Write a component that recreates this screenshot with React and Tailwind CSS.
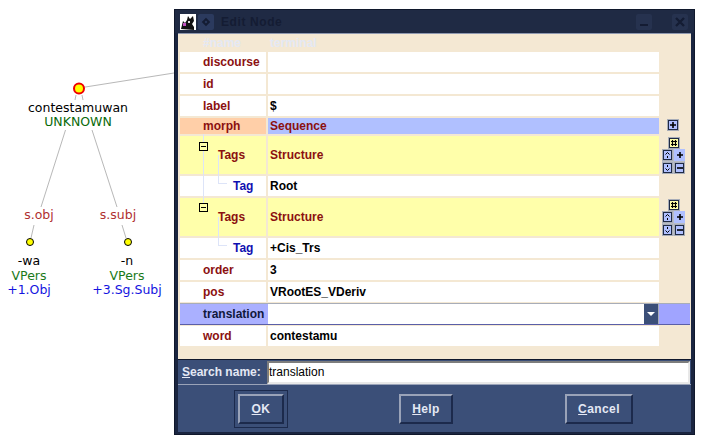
import React from "react";

const NAME_RED = "text-[#8b1010]";

function GlyphButton({ bg = "bg-[#b0c0ff]", children, size = "h-[12px] w-[12px]" }) {
  return (
    <span className={`flex items-center justify-center border border-[#a8adb8] ${size}`}>
      <span className={`flex h-full w-full items-center justify-center border border-[#1f2a44] ${bg}`}>
        {children}
      </span>
    </span>
  );
}

function PlusIcon() {
  return (
    <svg width="6" height="6" viewBox="0 0 6 6" className="shrink-0"><path d="M3 0v6M0 3h6" stroke="#000" strokeWidth="1.6" /></svg>
  );
}

function MinusIcon() {
  return (
    <svg width="6" height="6" viewBox="0 0 6 6" className="shrink-0"><path d="M0 3h6" stroke="#000" strokeWidth="1.6" /></svg>
  );
}

function HashIcon() {
  return (
    <svg width="6" height="6" viewBox="0 0 6 6" className="shrink-0"><path d="M1.5 0v6M4.5 0v6M0 1.5h6M0 4.5h6" stroke="#000" strokeWidth="1.2" /></svg>
  );
}

function ArrowIcon({ down }) {
  return (
    <svg width="5" height="6" viewBox="0 0 5 6" className="shrink-0">
      <path d={down ? "M2.5 0v2M2.5 5.5 .5 3.5M2.5 5.5 4.5 3.5" : "M2.5 6V4M2.5 .5 .5 2.5M2.5 .5 4.5 2.5"} stroke="#000" fill="none" />
    </svg>
  );
}

function StructureControls() {
  return (
    <div className="flex flex-col items-center pr-[2px] pt-px">
      <GlyphButton bg="bg-[#ffffaa]"><HashIcon /></GlyphButton>
      <div className="grid grid-cols-2 gap-px bg-[#b8bcc4]">
        <GlyphButton size="h-[12px] w-[11px]"><ArrowIcon /></GlyphButton>
        <span className="flex h-[12px] w-[11px] items-center justify-center bg-[#b0c0ff]"><PlusIcon /></span>
        <GlyphButton size="h-[12px] w-[11px]"><ArrowIcon down /></GlyphButton>
        <GlyphButton size="h-[12px] w-[11px]"><MinusIcon /></GlyphButton>
      </div>
    </div>
  );
}

function Row({ name, value, nameColor = NAME_RED, valueColor = "text-black", indent = "pl-[23px]", nameBg = "bg-white", valueBg = "bg-white", height = "h-[20px]", side }) {
  return (
    <div className={`flex items-stretch pl-[2px] mb-[2px] ${height}`}>
      <div className={`flex w-[86px] items-center ${indent} ${nameBg} ${nameColor}`}>{name}</div>
      <div className={`ml-[2px] flex w-[391px] items-center pl-[2px] ${valueBg} ${valueColor}`}>{value}</div>
      <div className="flex w-[31px] justify-center">{side}</div>
    </div>
  );
}

function DialogButton({ children, focused }) {
  const button = (
    <div className="flex h-[30px] w-full items-center justify-center border-2 border-t-[#9aa3b8] border-l-[#9aa3b8] border-r-[#1c2a4c] border-b-[#1c2a4c] text-[#e4e8f4] tracking-[0.4px]">
      {children}
    </div>
  );
  if (focused) {
    return <div className="flex h-[38px] w-[54px] items-center border border-[#1c2a4c] p-[3px]">{button}</div>;
  }
  return button;
}

function NodeTree() {
  return (
    <>
      <div className="absolute left-[25px] top-[100px] h-[70px] w-px bg-[#dde4f8]" />
      <div className="absolute left-[21px] top-[108px] flex h-[9px] w-[9px] items-center justify-center border border-black bg-[#ffffaa]"><span className="h-px w-[5px] bg-black" /></div>
      <div className="absolute left-[21px] top-[169px] flex h-[9px] w-[9px] items-center justify-center border border-black bg-[#ffffaa]"><span className="h-px w-[5px] bg-black" /></div>
      <div className="absolute left-[40px] top-[121px] h-[29px] w-[9px] border-l border-b border-[#dde4f8]" />
      <div className="absolute left-[40px] top-[183px] h-[29px] w-[9px] border-l border-b border-[#dde4f8]" />
    </>
  );
}

function EditNodeWindow() {
  return (
    <div className="absolute left-[174px] top-[9px] h-[426px] w-[521px] border border-[#10182c] bg-[#1a2540] font-['Liberation_Sans',sans-serif] text-[12px] font-bold">
      {/* Title bar */}
      <div className="flex h-[23px] items-center bg-[#1f2a44] pl-[5px] pr-[6px] text-[#141c33]">
        <span className="flex h-[16px] w-[16px] items-center justify-center bg-white">
          <svg width="16" height="16" viewBox="0 0 16 16">
            <path d="M1 15 3 7 5 9l2-3 1-4 2 3 3-3 1 5-2 3 2 3v3z" fill="#111" />
            <rect x="3" y="9" width="3" height="3" fill="#c050c0" />
            <rect x="8" y="7" width="2" height="2" fill="#ddd" />
          </svg>
        </span>
        <span className="ml-[2px] flex h-[16px] w-[16px] items-center justify-center rounded-[2px] bg-[#2b3a5e]">
          <span className="h-[6px] w-[6px] rotate-45 border-2 border-[#141c33]" />
        </span>
        <span className="ml-[7px] mt-px text-[12px] tracking-[0.6px]">Edit Node</span>
        <span className="ml-auto flex h-[16px] w-[16px] items-end justify-center rounded-[2px] bg-[#26324f] pb-[4px]">
          <span className="h-[2px] w-[8px] bg-[#141c33]" />
        </span>
        <span className="ml-[20px] flex h-[16px] w-[16px] items-center justify-center rounded-[2px] bg-[#26324f]">
          <svg width="10" height="10" viewBox="0 0 10 10"><path d="M1 1l8 8M9 1l-8 8" stroke="#141c33" strokeWidth="2.4" /></svg>
        </span>
      </div>

      <div className="mx-[3px] flex h-[399px] flex-col border-t border-[#8e98b0] bg-[#f4e8d3]">
        {/* Node table */}
        <div className="relative flex-1">
          <div className="flex h-[18px] items-center text-[#e4e8f4]">
            <span className="pl-[25px]">#name</span>
            <span className="absolute left-[92px]">terminal</span>
          </div>
          <Row name="discourse" />
          <Row name="id" />
          <Row name="label" value="$" />
          <Row name="morph" value="Sequence" valueColor={NAME_RED} nameBg="bg-[#ffcfa8]" valueBg="bg-[#b0c0ff]" height="h-[16px]"
            side={<div className="pr-[3px] pt-px"><GlyphButton><PlusIcon /></GlyphButton></div>} />
          <Row name="Tags" value="Structure" valueColor={NAME_RED} indent="pl-[38px]" nameBg="bg-[#ffffaa]" valueBg="bg-[#ffffaa]" height="h-[38px]"
            side={<StructureControls />} />
          <Row name="Tag" value="Root" nameColor="text-[#1010b0]" indent="pl-[53px]" />
          <Row name="Tags" value="Structure" valueColor={NAME_RED} indent="pl-[38px]" nameBg="bg-[#ffffaa]" valueBg="bg-[#ffffaa]" height="h-[38px]"
            side={<StructureControls />} />
          <Row name="Tag" value="+Cis_Trs" nameColor="text-[#1010b0]" indent="pl-[53px]" />
          <Row name="order" value="3" />
          <Row name="pos" value="VRootES_VDeriv" />

          {/* Selected row with the value dropdown */}
          <div className="mb-px -mt-px ml-[2px] mr-px flex h-[22px] border-t border-b border-t-[#a8adb8] border-b-[#5a5fa8] bg-[#a0a4ff]">
            <div className="flex w-[88px] items-center pl-[23px] bg-[#aab0ff] text-[#10183c]">translation</div>
            <div className="flex w-[376px] bg-white" />
            <div className="flex w-[15px] items-center justify-center bg-[#3b4f78] border-r border-[#a8adb8]">
              <span className="h-0 w-0 border-x-[4px] border-t-[4px] border-x-transparent border-t-white" />
            </div>
            <div className="flex-1" />
          </div>

          <Row name="word" value="contestamu" />
          <NodeTree />
        </div>

        {/* Search */}
        <div className="flex h-[25px] items-center border-t border-[#10182c] bg-[#3b4f78] pl-[4px] pr-px text-[#e4e8f4]">
          <span className="w-[85px] whitespace-nowrap"><span className="underline">S</span>earch name:</span>
          <div className="flex h-[23px] flex-1 items-center border-2 border-t-[#7d7d7d] border-l-[#7d7d7d] border-r-[#e8e8e8] border-b-[#e8e8e8] bg-white font-normal text-black">
            translation
          </div>
        </div>

        {/* Dialog buttons */}
        <div className="flex h-[48px] items-center border-t border-[#9aa3b8] bg-[#3b4f78] pl-[56px]">
          <div className="w-[54px]">
            <DialogButton focused><span><span className="underline">O</span>K</span></DialogButton>
          </div>
          <div className="ml-[111px] w-[54px]">
            <DialogButton><span><span className="underline">H</span>elp</span></DialogButton>
          </div>
          <div className="ml-[112px] w-[68px]">
            <DialogButton><span><span className="underline">C</span>ancel</span></DialogButton>
          </div>
        </div>
      </div>
    </div>
  );
}

function DependencyTree() {
  const label = "absolute -translate-x-1/2 whitespace-nowrap leading-none";
  return (
    <div className="font-['DejaVu_Sans',sans-serif] text-[12.5px]">
      <svg className="absolute left-0 top-0" width="175" height="300">
        <g stroke="#b8b8b8" strokeWidth="1">
          <path d="M79 88 174 73" />
          <path d="M76 95 75 100M82 95 83 100" />
          <path d="M65.5 130 41 207M34 225 31 238" />
          <path d="M92 130 117 207M122 225 126 238" />
        </g>
        <circle cx="79" cy="88.5" r="5" fill="#ffff00" stroke="#ee0000" strokeWidth="2" />
        <circle cx="30" cy="242" r="3.5" fill="#ffff00" stroke="#000" />
        <circle cx="128" cy="242" r="3.5" fill="#ffff00" stroke="#000" />
      </svg>

      <span className={`${label} left-[78px] top-[102px] text-black`}>contestamuwan</span>
      <span className={`${label} left-[78px] top-[116px] text-[#0a6a0a]`}>UNKNOWN</span>
      <span className={`${label} left-[39px] top-[209px] text-[#b03030]`}>s.obj</span>
      <span className={`${label} left-[118px] top-[209px] text-[#b03030]`}>s.subj</span>

      <span className={`${label} left-[29px] top-[255px] text-black`}>-wa</span>
      <span className={`${label} left-[29px] top-[270px] text-[#1a7a1a]`}>VPers</span>
      <span className={`${label} left-[29px] top-[284px] text-[#1414e0]`}>+1.Obj</span>

      <span className={`${label} left-[127px] top-[255px] text-black`}>-n</span>
      <span className={`${label} left-[127px] top-[270px] text-[#1a7a1a]`}>VPers</span>
      <span className={`${label} left-[127px] top-[284px] text-[#1414e0]`}>+3.Sg.Subj</span>
    </div>
  );
}

export default function App() {
  return (
    <div className="relative h-[447px] w-[720px] overflow-hidden bg-white">
      <DependencyTree />
      <EditNodeWindow />
    </div>
  );
}
